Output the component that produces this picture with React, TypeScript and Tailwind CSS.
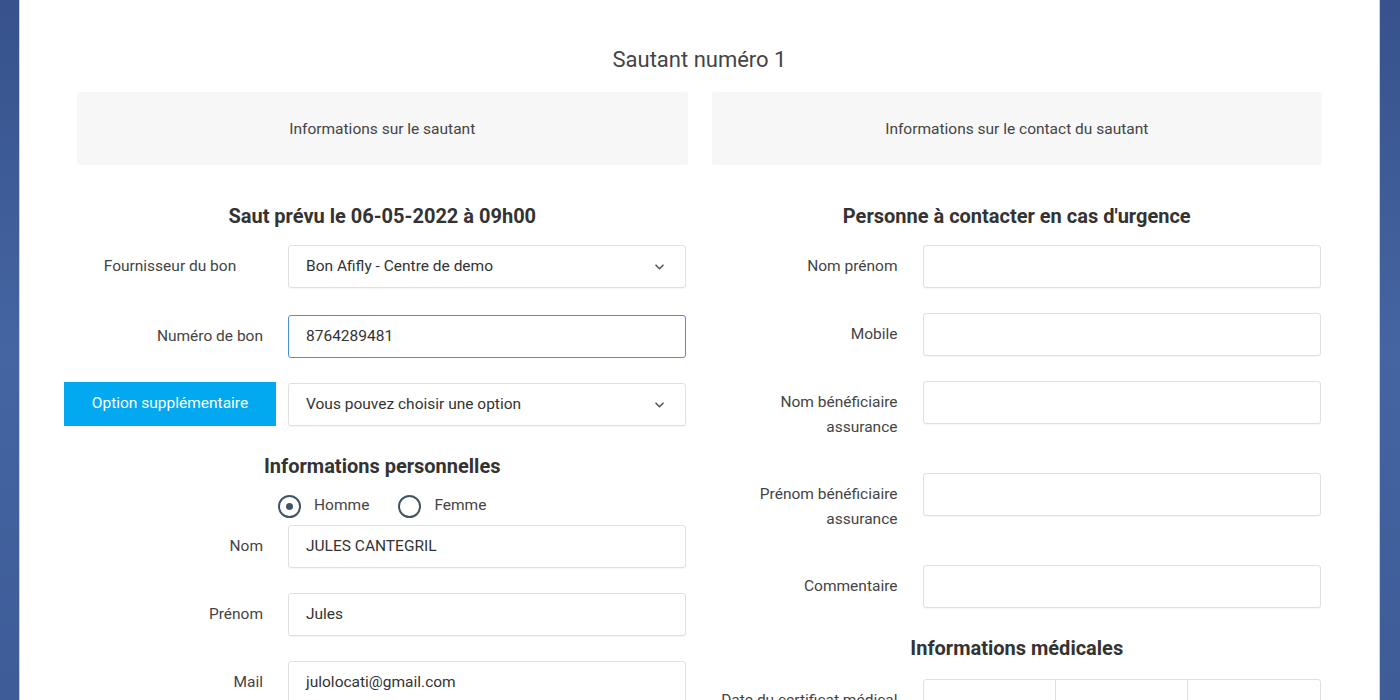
import { ReactNode } from 'react';

const FONT = "font-['Roboto','Liberation_Sans',sans-serif]";

function Chevron() {
  return (
    <svg width="9" height="6" viewBox="0 0 9 6" className="shrink-0">
      <path d="M1 1.2l3.5 3.5 3.5-3.5" fill="none" stroke="#555" strokeWidth="1.6" strokeLinecap="round" strokeLinejoin="round" />
    </svg>
  );
}

type RowProps = {
  label: ReactNode;
  children: ReactNode;
  className?: string;
  center?: boolean;
};

function Row({ label, children, className = '', center = false }: RowProps) {
  return (
    <div className={`-ml-[13px] flex items-start ${className}`}>
      <div
        className={`w-[212px] shrink-0 py-[9px] pr-[13px] text-[15.5px] leading-[25px] text-[#444] ${
          center ? 'pl-[13px] text-center' : 'text-right'
        }`}
      >
        {label}
      </div>
      <div className="ml-[12px] w-[398px] shrink-0">{children}</div>
    </div>
  );
}

function Field({ value = '', focused = false }: { value?: string; focused?: boolean }) {
  return (
    <div
      className={`flex h-[43px] items-center rounded-[3px] border bg-white px-[17px] pt-px text-[15.5px] text-[#333] ${
        focused ? 'border-[#4a90d6]' : 'border-[#e0e0e0] shadow-[0_1px_1px_rgba(0,0,0,0.04)]'
      }`}
    >
      {value}
    </div>
  );
}

function Select({ value }: { value: string }) {
  return (
    <div className="flex h-[43px] items-center justify-between rounded-[3px] border border-[#e0e0e0] bg-white pl-[17px] pr-[21px] pt-px text-[15.5px] text-[#333] shadow-[0_1px_1px_rgba(0,0,0,0.04)]">
      <span>{value}</span>
      <Chevron />
    </div>
  );
}

function Heading({ children, className = '' }: { children: ReactNode; className?: string }) {
  return (
    <h3 className={`text-center text-[20px] font-bold leading-[24px] text-[#333] ${className}`}>{children}</h3>
  );
}

function Radio({ checked, label }: { checked?: boolean; label: string }) {
  return (
    <label className="flex items-center gap-[13px] text-[15.5px] text-[#444]">
      <span className="flex size-[23px] items-center justify-center rounded-full border-2 border-[#3f5564]">
        {checked && <span className="size-[7px] rounded-full bg-[#3f5564]" />}
      </span>
      {label}
    </label>
  );
}

export default function App() {
  return (
    <div className={`flex h-[700px] overflow-hidden bg-gradient-to-b from-[#37528c] via-[#4465a2] to-[#3d5c98] ${FONT}`}>
      <div className="mx-[19px] w-[1361px] shrink-0 border-x border-[#c7d1e2] bg-white px-[57px] pt-[46px]">
        <h2 className="text-center text-[22px] leading-[28px] text-[#444]">Sautant numéro 1</h2>

        <div className="mt-[18px] grid grid-cols-2 gap-x-[24px]">
          <div className="flex h-[73px] items-center justify-center rounded-[2px] bg-[#f7f7f7] pt-[2px] text-[15.5px] text-[#444]">
            Informations sur le sautant
          </div>
          <div className="flex h-[73px] items-center justify-center rounded-[2px] bg-[#f7f7f7] pt-[2px] text-[15.5px] text-[#444]">
            Informations sur le contact du sautant
          </div>

          {/* sautant */}
          <div>
            <Heading className="mt-[39px]">Saut prévu le 06-05-2022 à 09h00</Heading>
            <Row label="Fournisseur du bon" center className="mt-[17px]">
              <Select value="Bon Afifly - Centre de demo" />
            </Row>
            <Row label="Numéro de bon" className="mt-[27px]">
              <Field value="8764289481" focused />
            </Row>
            <div className="-ml-[13px] mt-[25px] flex">
              <button className="-mt-px h-[44px] w-[212px] shrink-0 bg-[#03a9f0] text-[15.5px] text-white">
                Option supplémentaire
              </button>
              <div className="ml-[12px] w-[398px] shrink-0">
                <Select value="Vous pouvez choisir une option" />
              </div>
            </div>
            <Heading className="mt-[28px]">Informations personnelles</Heading>
            <div className="mt-[16px] flex h-[24px] items-center justify-center gap-[29px]">
              <Radio checked label="Homme" />
              <Radio label="Femme" />
            </div>
            <Row label="Nom" className="mt-[7px]">
              <Field value="JULES CANTEGRIL" />
            </Row>
            <Row label="Prénom" className="mt-[25px]">
              <Field value="Jules" />
            </Row>
            <Row label="Mail" className="mt-[25px]">
              <Field value="julolocati@gmail.com" />
            </Row>
          </div>

          {/* contact */}
          <div>
            <Heading className="mt-[39px]">Personne à contacter en cas d'urgence</Heading>
            <Row label="Nom prénom" className="mt-[17px]">
              <Field />
            </Row>
            <Row label="Mobile" className="mt-[25px]">
              <Field />
            </Row>
            <Row label={<>Nom bénéficiaire<br />assurance</>} className="mt-[25px]">
              <Field />
            </Row>
            <Row label={<>Prénom bénéficiaire<br />assurance</>} className="mt-[24px]">
              <Field />
            </Row>
            <Row label="Commentaire" className="mt-[24px]">
              <Field />
            </Row>
            <Heading className="mt-[28px]">Informations médicales</Heading>
            <Row label="Date du certificat médical" className="mt-[19px]">
              <div className="grid h-[43px] grid-cols-3 rounded-[3px] border border-[#e0e0e0] bg-white">
                <div className="border-r border-[#e0e0e0]" />
                <div className="border-r border-[#e0e0e0]" />
                <div />
              </div>
            </Row>
          </div>
        </div>
      </div>
    </div>
  );
}
